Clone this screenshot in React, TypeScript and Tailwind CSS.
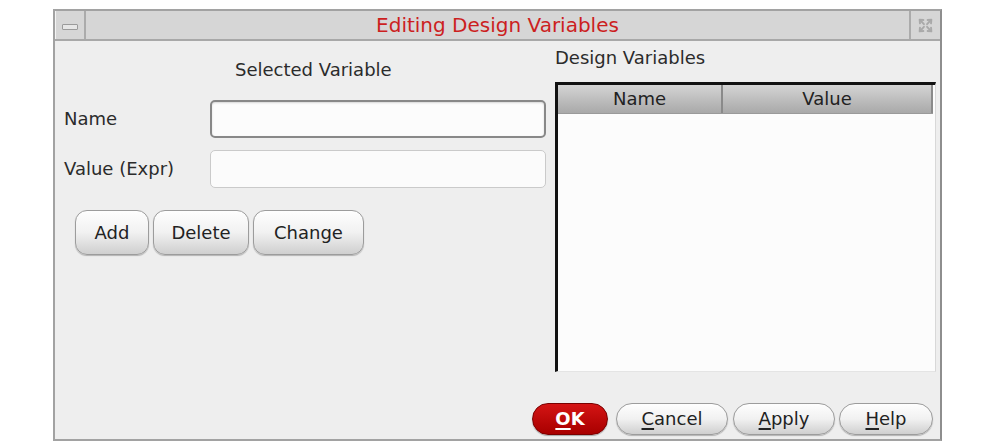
import React from "react";

const font = { fontFamily: '"DejaVu Sans", "Liberation Sans", sans-serif' };

function GelButton({ children, className = "" }: { children: React.ReactNode; className?: string }) {
    return (
        <div
            className={`flex items-center justify-center border border-[#9c9c9c] bg-gradient-to-b from-[#fefefe] via-[#f1f1f1] to-[#cfcfcf] shadow-[0_1px_1px_rgba(0,0,0,0.25)] text-[18px] leading-[22px] text-[#222] ${className}`}
        >
            {children}
        </div>
    );
}

function Mn({ children }: { children: React.ReactNode }) {
    return <span className="underline decoration-2 underline-offset-[3px]">{children}</span>;
}

export default function App() {
    return (
        <div className="w-[1004px] h-[448px] bg-white pl-[53px] pt-[9px]" style={font}>
            <div className="w-[889px] h-[432px] border-2 border-[#a2a2a2] border-r-[#8e8e8e] bg-[#eeeeee] flex flex-col">
                {/* title bar */}
                <div className="h-[30px] flex bg-[#d6d6d6] border-b-2 border-[#a8a8a8]">
                    <div className="w-[31px] flex items-center justify-center border-r-2 border-[#ababab] border-l border-l-[#f4f4f4]">
                        <div className="w-[16px] h-[6px] mt-[4px] bg-[#e6e6e6] border border-[#9a9a9a] rounded-[1px]" />
                    </div>
                    <div className="flex-1 flex items-center justify-center text-[20px] leading-[24px] text-[#cc1f1f]">
                        Editing Design Variables
                    </div>
                    <div className="w-[31px] flex items-center justify-center border-l-2 border-[#ababab]">
                        <svg width="17" height="17" viewBox="0 0 16 16" fill="none" stroke="#a9a9a9" strokeWidth="1.8" strokeLinecap="round">
                            <path d="M3 3 L6.5 6.8 M9.5 9.2 L13 13" />
                            <path d="M13 3 L9.5 6.8 M6.5 9.2 L3 13" />
                            <path d="M2.5 2.5 L6 2.8 M2.5 2.5 L2.8 6" />
                            <path d="M13.5 13.5 L10 13.2 M13.5 13.5 L13.2 10" />
                            <path d="M13.5 2.5 L10 2.8 M13.5 2.5 L13.2 6" />
                            <path d="M2.5 13.5 L6 13.2 M2.5 13.5 L2.8 10" />
                        </svg>
                    </div>
                </div>

                {/* body */}
                <div className="flex-1 flex flex-col">
                    <div className="flex">
                        {/* left: selected variable */}
                        <div className="w-[493px] flex flex-col text-[#2b2b2b]">
                            <div className="pt-[18px] pl-[180px] text-[18px] leading-[22px]">Selected Variable</div>
                            <div className="mt-[19px] flex items-center">
                                <div className="w-[155px] pl-[9px] text-[18px] leading-[22px]">Name</div>
                                <div className="w-[336px] h-[38px] rounded-[5px] border-2 border-[#888] bg-[#fcfcfc] shadow-[inset_0_1px_2px_rgba(0,0,0,0.15)]" />
                            </div>
                            <div className="mt-[12px] flex items-center">
                                <div className="w-[155px] pl-[9px] text-[18px] leading-[22px]">Value (Expr)</div>
                                <div className="w-[336px] h-[38px] rounded-[5px] border border-[#cacaca] bg-[#fbfbfb]" />
                            </div>
                            <div className="mt-[22px] pl-[20px] flex gap-[4px]">
                                <GelButton className="w-[74px] h-[45px] rounded-[12px]">Add</GelButton>
                                <GelButton className="w-[96px] h-[45px] rounded-[12px]">Delete</GelButton>
                                <GelButton className="w-[111px] h-[45px] rounded-[12px]">Change</GelButton>
                            </div>
                        </div>

                        {/* right: design variables table */}
                        <div className="flex-1 flex flex-col pl-[7px]">
                            <div className="pt-[6px] text-[18px] leading-[22px] text-[#2b2b2b]">Design Variables</div>
                            <div className="mt-[13px] w-[381px] h-[290px] border-t-[3px] border-l-[3px] border-[#111] border-r border-r-[#d8d8d8] border-b border-b-[#e4e4e4] bg-[#fcfcfc] flex flex-col">
                                <div className="h-[29px] mr-[2px] flex bg-gradient-to-b from-[#d4d4d4] to-[#a9a9a9] border-b border-[#9a9a9a] text-[18px] leading-[22px] text-[#222]">
                                    <div className="w-[165px] flex items-center justify-center border-r-2 border-[#8a8a8a]">Name</div>
                                    <div className="flex-1 flex items-center justify-center border-r-2 border-[#8a8a8a]">Value</div>
                                </div>
                            </div>
                        </div>
                    </div>

                    {/* bottom buttons */}
                    <div className="mt-[31px] flex justify-end pr-[7px]">
                        <div className="w-[76px] h-[32px] mr-[8px] rounded-full flex items-center justify-center bg-gradient-to-b from-[#d41414] to-[#a80000] border border-[#7a0000] shadow-[0_1px_1px_rgba(0,0,0,0.3)] text-white text-[18px] leading-[22px] font-bold">
                            <Mn>O</Mn>K
                        </div>
                        <GelButton className="w-[112px] h-[32px] mr-[5px] rounded-full"><Mn>C</Mn>ancel</GelButton>
                        <GelButton className="w-[102px] h-[32px] mr-[4px] rounded-full"><Mn>A</Mn>pply</GelButton>
                        <GelButton className="w-[94px] h-[32px] rounded-full"><Mn>H</Mn>elp</GelButton>
                    </div>
                </div>
            </div>
        </div>
    );
}
